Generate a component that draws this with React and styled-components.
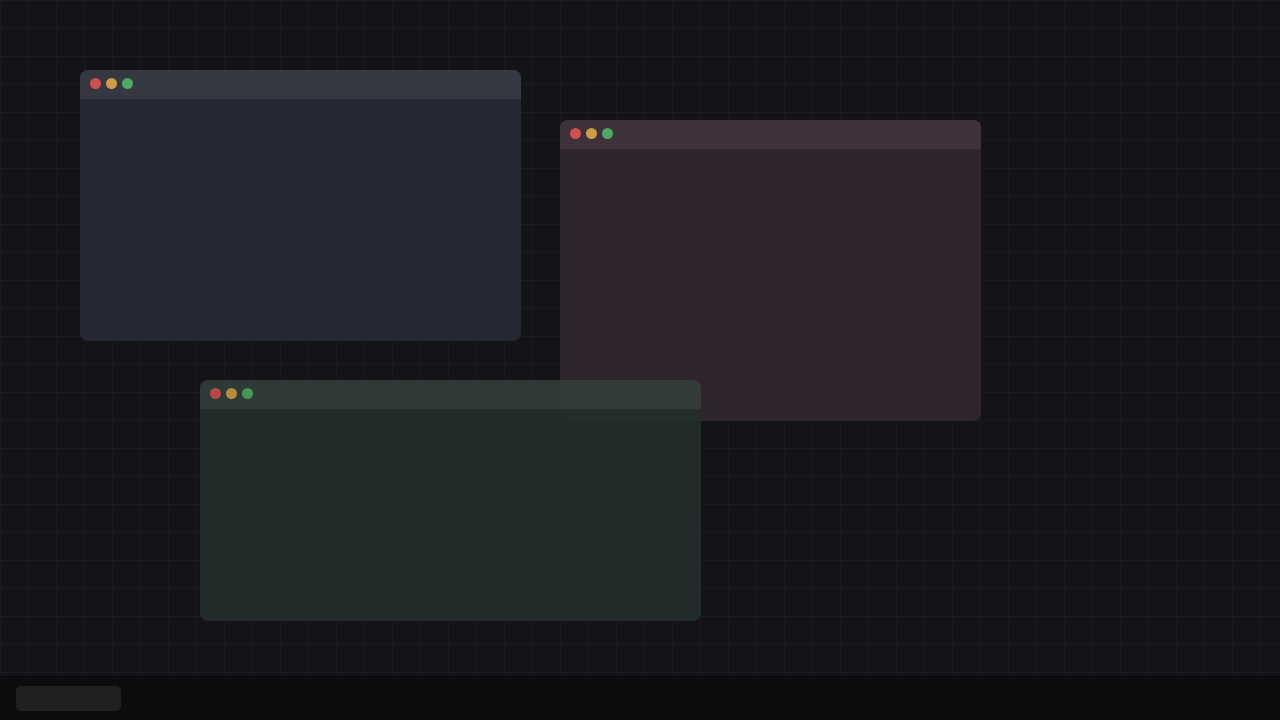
import React from "react";
import styled, { createGlobalStyle } from "styled-components";

const Global = createGlobalStyle`
  html, body { margin: 0; padding: 0; background: #131318; }
  body { font-family: "Inter", "Liberation Sans", sans-serif; overflow: hidden; }
`;

const Screen = styled.div`
  width: 1280px;
  height: 720px;
  display: flex;
  flex-direction: column;
`;

const Desktop = styled.main`
  position: relative;
  flex: 1;
  background-color: #131318;
  background-image:
    linear-gradient(to right, #1a1a20 1px, transparent 1px),
    linear-gradient(to bottom, #1a1a20 1px, transparent 1px);
  background-size: 28px 28px;
  overflow: hidden;
`;

const Window = styled.section`
  position: absolute;
  display: flex;
  flex-direction: column;
  border-radius: 8px;
  overflow: hidden;
  opacity: ${(p) => p.$opacity ?? 1};
  background: ${(p) => p.$body};
`;

const TitleBar = styled.header`
  height: 29px;
  flex: none;
  display: flex;
  align-items: flex-start;
  gap: 5px;
  padding: 8px 10px 0;
  box-sizing: border-box;
  background: ${(p) => p.$bar};
`;

const Dot = styled.span`
  width: 11px;
  height: 11px;
  border-radius: 50%;
  background: ${(p) => p.$color};
`;

const Taskbar = styled.footer`
  height: 44px;
  flex: none;
  display: flex;
  align-items: center;
  padding: 0 16px;
  background: #0c0c0e;
`;

const TaskButton = styled.div`
  width: 105px;
  height: 25px;
  border-radius: 5px;
  background: #202023;
`;

const windows = [
  { id: "a", x: 80, y: 70, w: 441, h: 271, bar: "#353841", body: "#252833" },
  { id: "b", x: 560, y: 120, w: 421, h: 301, bar: "#3e313a", body: "#30242d" },
  { id: "c", x: 200, y: 380, w: 501, h: 241, bar: "#333f3a", body: "#232f2b", opacity: 0.88 },
];

export default function App() {
  return (
    <Screen>
      <Global />
      <Desktop>
        {windows.map((w) => (
          <Window
            key={w.id}
            $body={w.body}
            $opacity={w.opacity}
            style={{ left: w.x, top: w.y, width: w.w, height: w.h }}
          >
            <TitleBar $bar={w.bar}>
              <Dot $color="#cf5050" />
              <Dot $color="#cc9d45" />
              <Dot $color="#4caa64" />
            </TitleBar>
          </Window>
        ))}
      </Desktop>
      <Taskbar>
        <TaskButton />
      </Taskbar>
    </Screen>
  );
}
